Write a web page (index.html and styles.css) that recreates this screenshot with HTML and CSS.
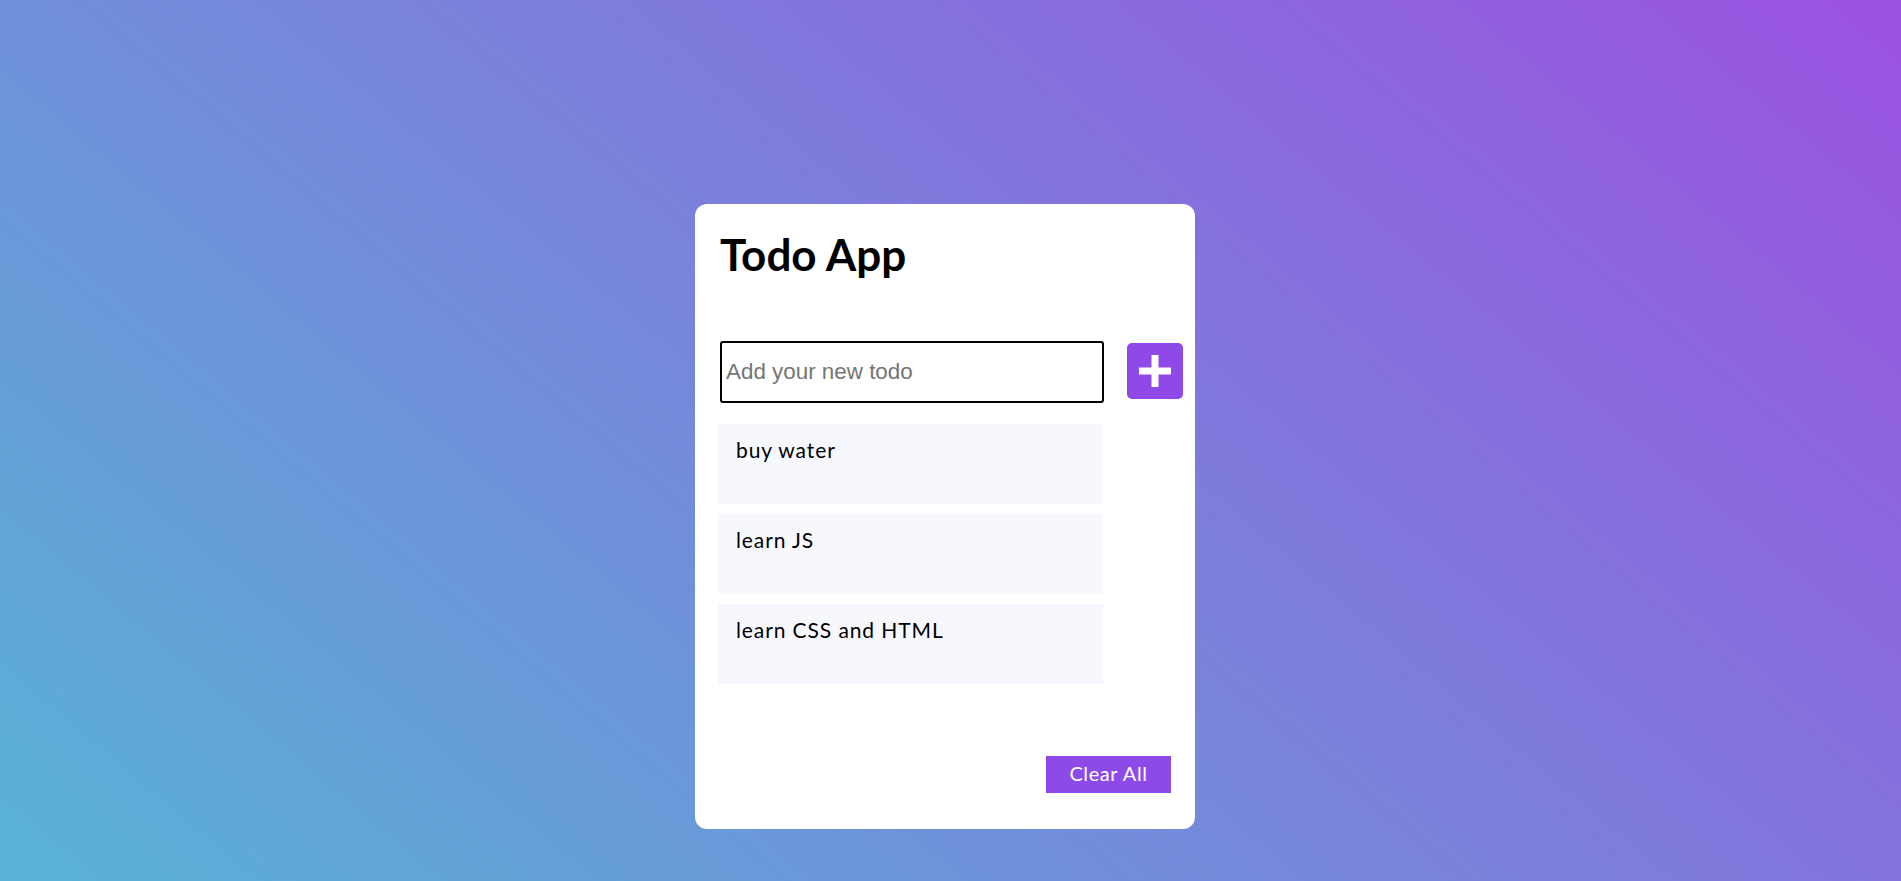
FILE: index.html
```html
<!DOCTYPE html>
<html lang="en">
<head>
<meta charset="utf-8">
<title>Todo App</title>
<link rel="stylesheet" href="styles.css">
</head>
<body>
<main class="page">
  <section class="card">
    <h1 class="title">Todo App</h1>
    <div class="input-row">
      <input class="todo-input" type="text" placeholder="Add your new todo">
      <button class="add-btn" aria-label="Add">
        <svg width="32" height="32" viewBox="0 0 32 32"><rect x="12.5" y="0" width="7" height="32" fill="#fff"/><rect x="0" y="12.5" width="32" height="7" fill="#fff"/></svg>
      </button>
    </div>
    <ul class="todo-list">
      <li class="todo-item">buy water</li>
      <li class="todo-item">learn JS</li>
      <li class="todo-item">learn CSS and HTML</li>
    </ul>
    <div class="footer">
      <button class="clear-btn">Clear All</button>
    </div>
  </section>
</main>
</body>
</html>
```
FILE: styles.css
```css
* { box-sizing: border-box; }
html, body { margin: 0; padding: 0; }
body {
  min-height: 100vh;
  background: linear-gradient(40deg, #58b3d6, #9b51e0);
  font-family: Lato, "Noto Sans", sans-serif;
}
.page {
  display: flex;
  justify-content: center;
  padding-top: 204px;
  padding-right: 11px;
  height: 881px;
  overflow: hidden;
}
.card {
  width: 500px;
  height: 625px;
  background: #fff;
  border-radius: 12px;
  padding: 0 12px 36px 23px;
  display: flex;
  flex-direction: column;
}
.title {
  margin: 24px 0 0 2px;
  font-size: 44px;
  line-height: 52px;
  font-weight: 700;
  color: #000;
}
.input-row {
  display: flex;
  align-items: flex-start;
  gap: 23px;
  margin-top: 61px;
}
.todo-input {
  width: 384px;
  height: 62px;
  margin: 0 0 0 2px;
  border: 2px solid #000;
  border-radius: 3px;
  padding: 0 4px;
  font-family: "Liberation Sans", Arial, sans-serif;
  font-size: 22.4px;
  color: #000;
  outline: none;
}
.todo-input::placeholder { color: #757575; }
.add-btn {
  width: 56px;
  height: 56px;
  margin-top: 2px;
  border: none;
  border-radius: 5px;
  background: #8e49e8;
  display: flex;
  align-items: center;
  justify-content: center;
  padding: 0;
}
.todo-list {
  list-style: none;
  margin: 21px 0 0 0;
  padding: 0;
  width: 385px;
  display: flex;
  flex-direction: column;
  gap: 10px;
}
.todo-item {
  height: 80px;
  background: #f7f8fe;
  padding: 14px 18px;
  font-size: 21px;
  letter-spacing: 0.9px;
  line-height: 24px;
  color: #000;
}
.footer {
  margin-top: auto;
  display: flex;
  justify-content: flex-end;
  padding-right: 12px;
}
.clear-btn {
  width: 125px;
  height: 37px;
  border: none;
  background: #8e4ae8;
  color: #fff;
  font-family: Lato, "Noto Sans", sans-serif;
  font-size: 20px;
  letter-spacing: 0.6px;
  padding: 0 0 3px 0;
}
```
